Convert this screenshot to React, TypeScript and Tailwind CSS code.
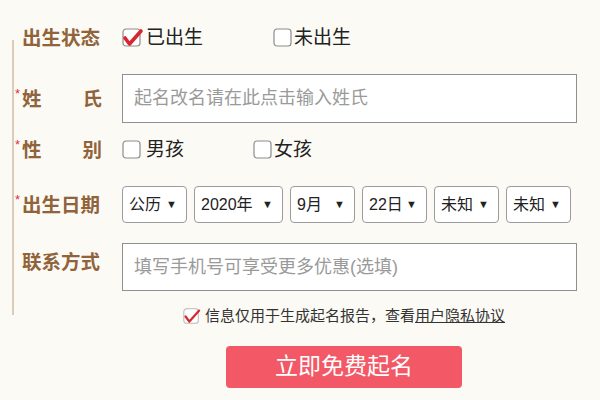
import React from 'react';

const font = { fontFamily: '"Liberation Sans", "Noto Sans CJK SC", sans-serif' };

function Box({ checked = false, small = false }: { checked?: boolean; small?: boolean }) {
  const s = small ? 15 : 18;
  return (
    <svg width={s + 2} height={s + 2} viewBox="0 0 20 20" className="shrink-0 overflow-visible">
      <rect x="1" y="1" width="17" height="17" rx="3" fill="#fff" stroke={small ? '#b9b9b9' : '#8c8c8c'} strokeWidth="1.2" />
      {checked && (
        <polyline points="3,10 7.5,16 19,3" fill="none" stroke="#d8262e" strokeWidth={small ? 2.6 : 3.6} strokeLinecap="round" strokeLinejoin="round" />
      )}
    </svg>
  );
}

function Label({ text, star = false, spread = false }: { text: string; star?: boolean; spread?: boolean }) {
  return (
    <div className="flex w-[107px] shrink-0 items-start">
      <span className="w-[7px] text-[13px] leading-[14px] text-[#e0312f]">{star ? '*' : ''}</span>
      <span
        className={`flex w-[80px] text-[19.5px] font-bold leading-[24px] text-[#90633a] ${spread ? 'justify-between' : ''}`}
      >
        {spread ? text.split('').map((c, i) => <span key={i}>{c}</span>) : text}
      </span>
    </div>
  );
}

function Select({ value, w }: { value: string; w: string }) {
  return (
    <div
      className={`flex h-[37px] items-center justify-between rounded-[4px] border border-[#9c9c9c] bg-white pl-[6px] pr-[9px] text-[16px] text-[#222] ${w}`}
    >
      <span>{value}</span>
      <span className="text-[11px] leading-none text-[#222]">▼</span>
    </div>
  );
}

export default function App() {
  return (
    <div className="relative h-[400px] w-[600px] overflow-hidden bg-[#fcfaf5]" style={font}>
      <div className="absolute left-[12px] top-[40px] h-[275px] w-[2px] bg-[#ddcdb8]" />
      <div className="flex flex-col pl-[15px] pt-[23px]">
        <div className="flex h-[30px] items-center">
          <Label text="出生状态" />
          <div className="flex items-center">
            <Box checked />
            <span className="ml-[4px] text-[19px] text-[#222]">已出生</span>
          </div>
          <div className="ml-[70px] flex items-center">
            <Box />
            <span className="ml-[1px] text-[19px] text-[#222]">未出生</span>
          </div>
        </div>

        <div className="mt-[21px] flex items-center">
          <Label text="姓氏" star spread />
          <div className="flex h-[49px] w-[455px] items-center border border-[#8f8f8f] bg-white pl-[11px] text-[18px] text-[#9a9a9a]">
            起名改名请在此点击输入姓氏
          </div>
        </div>

        <div className="mt-[12px] flex h-[30px] items-center">
          <Label text="性别" star spread />
          <div className="flex items-center">
            <Box />
            <span className="ml-[4px] text-[19px] text-[#222]">男孩</span>
          </div>
          <div className="ml-[69px] flex items-center">
            <Box />
            <span className="ml-[1px] text-[19px] text-[#222]">女孩</span>
          </div>
        </div>

        <div className="mt-[21px] flex items-center">
          <Label text="出生日期" star />
          <div className="flex gap-[7px]">
            <Select value="公历" w="w-[65px]" />
            <Select value="2020年" w="w-[89px]" />
            <Select value="9月" w="w-[65px]" />
            <Select value="22日" w="w-[65px]" />
            <Select value="未知" w="w-[65px]" />
            <Select value="未知" w="w-[65px]" />
          </div>
        </div>

        <div className="mt-[20px] flex items-center">
          <div className="-mt-[10px]">
            <Label text="联系方式" />
          </div>
          <div className="flex h-[48px] w-[455px] items-center border border-[#8f8f8f] bg-white pl-[11px] text-[18px] text-[#9a9a9a]">
            填写手机号可享受更多优惠(选填)
          </div>
        </div>
      </div>

      <div className="mt-[14px] flex justify-center pl-[122px] pr-[34px]">
        <div className="flex items-center text-[15px] text-[#333]">
          <Box checked small />
          <span className="ml-[5px]">
            信息仅用于生成起名报告，查看<span className="underline">用户隐私协议</span>
          </span>
        </div>
      </div>

      <div className="mt-[18px] flex justify-center pl-[122px] pr-[34px]">
        <button className="flex h-[42px] w-[236px] items-center justify-center rounded-[4px] bg-[#f25865] text-[23px] text-white">
          立即免费起名
        </button>
      </div>
    </div>
  );
}
